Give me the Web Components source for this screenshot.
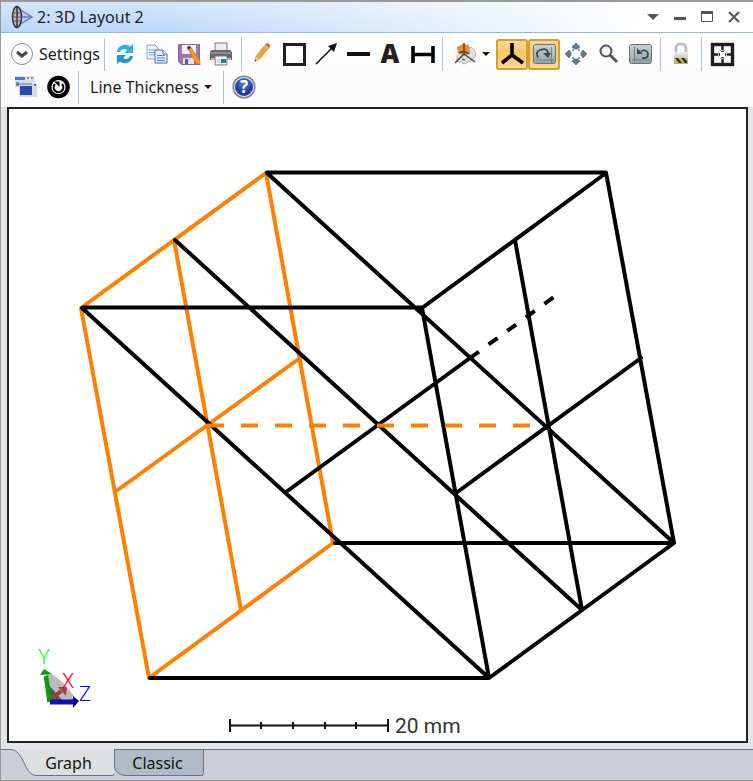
<!DOCTYPE html>
<html lang="en">
<head>
<meta charset="utf-8">
<title>2: 3D Layout 2</title>
<style>
html,body{margin:0;height:100%}
body{font:16px/22px "Noto Sans","Open Sans",sans-serif;color:#222}
</style>
</head>
<body>
<layout-window></layout-window>

<script>
const define = (name, html, setup) => {
  const t = document.createElement('template');
  t.innerHTML = html;
  customElements.define(name, class extends HTMLElement {
    constructor() {
      super();
      this.attachShadow({ mode: 'open' }).appendChild(t.content.cloneNode(true));
    }
    connectedCallback() { if (setup) setup(this, this.shadowRoot); }
  });
};

const gradients = `<defs>
<linearGradient id="m" x2="0" y2="1"><stop offset="0" stop-color="#c9d2d4"/><stop offset="1" stop-color="#93a2a6"/></linearGradient>
<radialGradient id="b" cy=".3"><stop offset="0" stop-color="#5b83de"/><stop offset="1" stop-color="#1d3ca0"/></radialGradient>
<linearGradient id="k" x2="0" y2="1"><stop offset="0" stop-color="#eee"/><stop offset="1" stop-color="#aaa"/></linearGradient></defs>`;

const icons = {
  chevron: '<circle cx="12" cy="12" r="10.500" fill="#fff" stroke="#888"/><path d="M7 10l5 4 5-4" fill="none" stroke="#444" stroke-width="3"/>',
  refresh: '<path d="M4 10C5 3 13 1 17 4.500L20 2v9h-9l3-3C11 6 8 7 7 10z" fill="#2fb0ec"/><path d="M20 14c-1 7-9 9-13 5.500L4 22v-9h9l-3 3c3 2 6 1 7-2z" fill="#2196dc"/>',
  copy: '<path d="M2 3h8l3 3v11H2z" fill="#eaf3fc" stroke="#86a6d2"/><path d="M4 8h6M4 10.500h6M4 13h6" stroke="#7ea5dd"/><path d="M10 8h8l4 4v9H10z" fill="#e4f0fc" stroke="#4468b6"/><path d="M18 8v4h4" fill="#fff" stroke="#4468b6"/><path d="M12 13.500h8M12 16h8M12 18.500h8" stroke="#4689da"/>',
  save: '<path d="M1.500 2.500h21v20h-18l-3-3z" fill="#9b78ae" stroke="#84649a"/><path d="M5 3h14v9H5z" fill="#f3f1f7"/><path d="M6 16h11v6H6z" fill="#e3dfeb"/><path d="M8 17h3v5H8z" fill="#70558a"/><path d="M10 5l3-1 10 15v4l-4-2z" fill="#f19a22" stroke="#bd6817" stroke-width=".6"/><path d="M10 5l3-1 1 2-3 2z" fill="#4c3c45"/>',
  print: '<path d="M6 1h12v9H6z" fill="#eee" stroke="#777"/><path d="M3 8h18l2 2v8H1v-8z" fill="#666"/><path d="M2 10h20v2H2z" fill="#8d8d8d"/><path d="M2 16h20v2H2z" fill="#bbb"/><path d="M6 14h12v9H6z" fill="#f5f5f5" stroke="#777"/><path d="M12 17h5v4h-5z" fill="#277c90"/><path d="M8 17h3v4H8z" fill="#cde"/>',
  pencil: '<path d="M5 19l1-4.500L16 2l3.500 3L9 17.500z" fill="#f2a42b" stroke="#bd7c26" stroke-width=".7"/><path d="M16 2l1.500-1 3 2.500L19.500 5z" fill="#e3333b"/><path d="M14.500 4l3.500 3" stroke="#bbb" stroke-width="1.400"/><path d="M4.500 19.500l1.500-5L9 17.500z" fill="#e6cfa9"/><path d="M4.500 19.500l.700-2 1.500 1.200z" fill="#333"/>',
  rect: '<rect x="2.500" y="2.500" width="20" height="20" fill="#fff" stroke="#231f20" stroke-width="3"/>',
  arrow: '<path d="M2 22L19 5" stroke="#111" stroke-width="1.600"/><path d="M23 1l-9 3 6 6z" fill="#111"/>',
  line: '<path d="M1 12h23" stroke="#111" stroke-width="4"/>',
  letter: '<text x="12" y="21" text-anchor="middle" font-family="Open Sans,Noto Sans,sans-serif" font-weight="800" font-size="26" fill="#231f20">A</text>',
  dim: '<path d="M3 4v17M23 4v17M3 12.500h19" stroke="#000" stroke-width="3.600"/>',
  view: '<path d="M4 14q2-4 7-3l3-5q5-2 7 2 3 3 1 7l-4 4-7 3-7-3z" fill="#dedfe0" stroke="#999" stroke-width=".7"/><path d="M4 5l6-3 6 1 1 8-6 3-6-3z" fill="#ee8d2c"/><path d="M11 1v11L2 21M11 12l11 8" fill="none" stroke="#464646" stroke-width="1.500"/><path d="M6 11q5-3 10 1M9 17l3 1" fill="none" stroke="#444" stroke-width="1.300"/>',
  axes: '<path d="M12 1v12L2 21M12 13l11 8" fill="none" stroke="#000" stroke-width="3.600"/>',
  spin: '<rect x="1.500" y="2.500" width="22" height="19" rx="2" fill="url(#m)" stroke="#66757a"/><path d="M19.500 5v15M4 18h18" stroke="#738388" fill="none"/><path d="M6 16q-3-6 2-8 8-3 8 4" fill="none" stroke="#354a51" stroke-width="1.800"/><path d="M11 11h8l-3 5z" fill="#354a51"/>',
  move: '<g fill="#5c7c93" stroke="#45667e" stroke-width=".6"><path d="M12 1l4 4-2.500 2h-3L8 5zM12 23l4-4-2.500-2h-3L8 19zM1 12l4-4 2 2.500v3L5 16zM23 12l-4-4-2 2.500v3l2 2.500z"/></g><path d="M8 8h2M14 8h2M8 16h2M14 16h2" stroke="#8aa0af" stroke-width="2"/>',
  zoom: '<circle cx="10" cy="9" r="5.500" fill="#fafafa" stroke="#555" stroke-width="2"/><path d="M14 13l7 7" stroke="#555" stroke-width="3"/>',
  unspin: '<rect x="1.500" y="2.500" width="22" height="19" rx="2" fill="url(#m)" stroke="#66757a"/><path d="M6.500 5v15M4 18h18" stroke="#738388" fill="none"/><path d="M14 16q6 1 6-4-1-5-7-3" fill="none" stroke="#354a51" stroke-width="1.800"/><path d="M9 12V6l6 6z" fill="#354a51"/>',
  lock: '<path d="M7 12V6q0-4 5-4t5 4v6" fill="none" stroke="#bbb" stroke-width="2.600"/><path d="M5 10h14v12H5z" fill="url(#k)"/><path d="M6 16h12v5H6z" fill="#d9b930"/><path d="M6 16l4 5h3l-4-5zM12 16l4 5h2v-2l-3-3z" fill="#32301d"/>',
  fit: '<rect x="2.500" y="2.500" width="20" height="20" fill="#fff" stroke="#231f20" stroke-width="3.400"/><path d="M12.500 3v7M12.500 15v7M3 12.500h7M15 12.500h7" stroke="#231f20" stroke-width="2.400"/><path d="M10 8.500h5M10 16.500h5M8.500 10v5M16.500 10v5" stroke="#bbb"/>',
  windows: '<path d="M1 1h20v11H1z" fill="#dde0e7"/><path d="M1 2h10v3H1z" fill="#5c76bb"/><path d="M13 2h2v2h-2zM17 2h2v2h-2z" fill="#8792a1"/><path d="M2 7h3v4H2z" fill="#6a82c2"/><path d="M5 8h18v14H5z" fill="#d5dae4"/><path d="M5 8h13v2H5z" fill="#94a6cf"/><path d="M6 11h12v9H6z" fill="#2b4ba6"/><path d="M20 9h2v2h-2z" fill="#69788c"/>',
  reset: '<circle cx="12.500" cy="12" r="9.200" fill="#fff" stroke="#000" stroke-width="4.200"/><path d="M9 9a4.800 4.800 0 1 0 7 0" fill="none" stroke="#000" stroke-width="2.200"/><path d="M8 6.500l5.500 0v5.500z" fill="#000"/>',
  help: '<circle cx="12" cy="12" r="10.800" fill="#e9ecf3" stroke="#7f8698" stroke-width="1.600"/><circle cx="12" cy="12" r="9" fill="url(#b)"/><text x="12" y="18" text-anchor="middle" font-family="Noto Sans,sans-serif" font-weight="700" font-size="17" fill="#fff">?</text>',
  lens: '<path d="M7 2v20M9 4l13 8-13 8M12 12h10" stroke="#6e78cc" stroke-width="1.400" fill="#b9c8f2"/><ellipse cx="7" cy="12" rx="4.500" ry="10.500" fill="#b4b8bd" stroke="#303238" stroke-width="1.500"/><path d="M7 2v20" stroke="#333" stroke-width="1.500"/><path d="M3 8h8M2 12h10M3 16h8" stroke="#555"/>',
  down: '<path d="M6 9h12L12 15z" fill="#555"/>',
  min: '<path d="M6 13.500h12" stroke="#555" stroke-width="3"/>',
  max: '<path d="M6.500 6.500h11v10h-11z" fill="none" stroke="#555"/><path d="M6 7.500h12" stroke="#555" stroke-width="3"/>',
  close: '<path d="M7 7l10 10M17 7L7 17" stroke="#555" stroke-width="2"/>'
};

define('ui-icon', `<style>:host{display:block;width:24px;height:24px;flex:none}svg{display:block;width:100%;height:100%;overflow:visible}</style><svg viewBox="0 0 24 24" aria-hidden="true"></svg>`,
  (el, r) => { r.querySelector('svg').innerHTML = gradients + icons[el.getAttribute('name')]; });

define('tool-button', `<style>
:host{display:block;flex:none}
button{box-sizing:border-box;font:inherit;color:inherit;background:none;border:1px solid transparent;border-radius:3px;margin:0;padding:0;display:flex;align-items:center;justify-content:center;width:32px;height:31px}
:host([pressed]) button{border:2px solid #cfa033;background:linear-gradient(#fbd698,#ffc568 45%,#ffdb8c)}
:host([wide]) button{width:100%;gap:5px}
:host([window]) button{width:27px;height:24px}
</style><button type="button"><slot></slot></button>`,
  (el, r) => {
    const b = r.querySelector('button');
    b.setAttribute('aria-label', el.getAttribute('label'));
    if (el.hasAttribute('pressed')) b.setAttribute('aria-pressed', 'true');
  });

define('tool-separator', `<style>:host{display:flex;flex:none;width:9px;height:33px;align-items:stretch;justify-content:center}i{width:1px;background:#a9c1dc}</style><i></i>`);
define('menu-caret', `<style>:host{display:block;flex:none;border:4px solid transparent;border-top-color:#111;border-bottom:0}</style>`);

define('title-bar', `<style>
:host{display:flex;align-items:center;height:30px;padding:0 6px 0 9px;border-bottom:1px solid #9ab8d3;background:linear-gradient(90deg,transparent 20%,#fff 85%),linear-gradient(#d5e5fa,#bbd7fc)}
h1{font:inherit;margin:0 0 0 3px;flex:1}
nav{display:flex}
</style>
<ui-icon name="lens"></ui-icon><h1><slot></slot></h1>
<nav aria-label="Window">
<tool-button window label="Window menu"><ui-icon name="down"></ui-icon></tool-button>
<tool-button window label="Minimize"><ui-icon name="min"></ui-icon></tool-button>
<tool-button window label="Maximize"><ui-icon name="max"></ui-icon></tool-button>
<tool-button window label="Close"><ui-icon name="close"></ui-icon></tool-button>
</nav>`);

const tool = (name, label, extra = '') => `<tool-button label="${label}" ${extra}><ui-icon name="${name}"></ui-icon></tool-button>`;
define('tool-bar', `<style>
:host{display:flex;flex-wrap:wrap;align-items:center;padding:5px 5px 3px 9px;background:linear-gradient(#fff,#fafafa)}
tool-button{height:32px}
.settings{width:90px}
.view{width:49px}
.thick{width:136px}
</style>
<tool-button wide class="settings" label="Settings"><ui-icon name="chevron"></ui-icon>Settings</tool-button>
<tool-separator></tool-separator>
${tool('refresh', 'Update')}${tool('copy', 'Copy')}${tool('save', 'Save as')}${tool('print', 'Print')}
<tool-separator></tool-separator>
${tool('pencil', 'Draw')}${tool('rect', 'Rectangle')}${tool('arrow', 'Arrow')}${tool('line', 'Line')}${tool('letter', 'Text')}${tool('dim', 'Dimension')}
<tool-separator></tool-separator>
<tool-button wide class="view" label="Camera views"><ui-icon name="view"></ui-icon><menu-caret></menu-caret></tool-button>
${tool('axes', 'Show axes', 'pressed')}${tool('spin', 'Rotate', 'pressed')}${tool('move', 'Pan')}${tool('zoom', 'Zoom')}${tool('unspin', 'Reset rotation')}
<tool-separator></tool-separator>
${tool('lock', 'Lock')}
<tool-separator></tool-separator>
${tool('fit', 'Fit')}
${tool('windows', 'Windows')}${tool('reset', 'Reset')}
<tool-separator></tool-separator>
<tool-button wide class="thick" label="Line Thickness">Line Thickness<menu-caret></menu-caret></tool-button>
<tool-separator></tool-separator>
${tool('help', 'Help')}`);

define('layout-plot', `<style>
:host{display:block;border:2px solid #222;background:#fff;min-height:0;overflow:hidden}
svg{display:block;width:100%;height:100%}
.k,.o{stroke:#000;stroke-width:4;fill:none;stroke-linecap:round;stroke-linejoin:round}
.o{stroke:#ff8000}
.dash{stroke-linecap:butt}
text{font:300 20px Roboto,"Liberation Sans",sans-serif}
.scale{font-size:21px;font-weight:400;fill:#333}
</style>
<svg viewBox="9 109 737 632" role="img" aria-label="3D layout">
<path class="o" d="M266 173L81 308 149 678 333 543zM174 240L241 610M115 492L300 358"/>
<path class="k" d="M267 172.500H606L674 543 489 678 422 308 606 173M150 678H489M83 307.500H421M335 543H674M82 308L489 678M267 173L674 543M175 240L582 610 515 240M456 493L641 358M286 492L470 358"/>
<path class="o dash" stroke-dasharray="17 17" d="M207 425.500H540"/>
<path class="k dash" stroke-dasharray="11 12" d="M470 358L554 297"/>
<path d="M45 670L76 701H50z" fill="#999"/><path d="M47 672q12 4 27 24l-4 4H52z" fill="#bbb"/><path d="M48 684l14 16H50z" fill="#555"/>
<path d="M53 698l8-7" stroke="#944" stroke-width="4"/><path d="M58 687l9 0-1 9z" fill="#a44"/>
<path d="M49.500 702l-3.500-26" stroke="#0a9a0a" stroke-width="4.500"/><path d="M40 675l4-6 8 5z" fill="#0a9a0a"/>
<path d="M50 702h24" stroke="#1010b0" stroke-width="5"/><path d="M73 696l6 5-6 7z" fill="#000090"/>
<text x="44" y="664" text-anchor="middle" fill="#0f0">Y</text>
<text x="68" y="688" text-anchor="middle" fill="#f00">X</text>
<text x="85" y="701" text-anchor="middle" fill="#00f">Z</text>
<path d="M230 719v13M388 719v13M230 725.500H388M261 722v7M293 722v7M325 722v7M356 722v7" stroke="#111" stroke-width="2"/>
<text class="scale" x="395" y="733">20 mm</text>
</svg>`);

define('tab-strip', `<style>
:host{display:block;height:31px;background:#cbced4;box-shadow:inset 0 1px #687087}
div{display:flex}
button{position:relative;font:inherit;color:#111;border:0;background:none;margin:0;padding:0;display:block;height:27px}
svg{position:absolute;inset:0;width:100%;height:100%}
span{position:relative}
.g{width:113px;padding-left:22px}
.c{width:90px;padding-right:3px}
</style><div role="tablist">
<button class="g" role="tab" aria-selected="true"><svg viewBox="0 0 113 27"><path d="M0 0H113V26H36C22 26 24 .5 9 .5H0z" fill="#dddfe3"/><path d="M0 .5H9C24 .5 22 26.500 36 26.500H111q2 0 2-2" fill="none" stroke="#687087"/></svg><span>Graph</span></button>
<button class="c" role="tab" aria-selected="false"><svg viewBox="0 0 90 27"><path d="M.5 .5H89.500V24.500q0 2-2 2H12Q3 26 .5 19z" fill="#b0b9c5" stroke="#687087"/></svg><span>Classic</span></button>
</div>`);

define('layout-window', `<style>
:host{display:flex;flex-direction:column;box-sizing:border-box;height:100vh;border:solid #999;border-width:2px 0 1px 1px;background:#e3e5e9}
layout-plot{flex:1;margin:0 5px 6px 6px}
</style>
<title-bar>2: 3D Layout 2</title-bar>
<tool-bar></tool-bar>
<layout-plot></layout-plot>
<tab-strip></tab-strip>`);
</script>
</body>
</html>
